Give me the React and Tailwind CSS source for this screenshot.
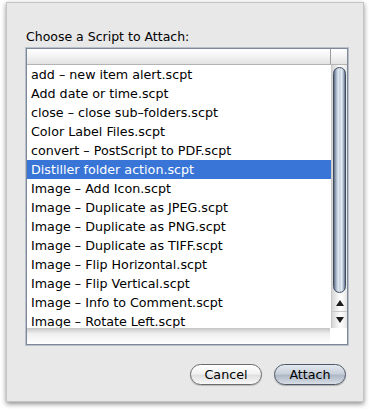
import React from 'react';

const SCRIPTS = [
  'add – new item alert.scpt',
  'Add date or time.scpt',
  'close – close sub–folders.scpt',
  'Color Label Files.scpt',
  'convert – PostScript to PDF.scpt',
  'Distiller folder action.scpt',
  'Image – Add Icon.scpt',
  'Image – Duplicate as JPEG.scpt',
  'Image – Duplicate as PNG.scpt',
  'Image – Duplicate as TIFF.scpt',
  'Image – Flip Horizontal.scpt',
  'Image – Flip Vertical.scpt',
  'Image – Info to Comment.scpt',
  'Image – Rotate Left.scpt',
];

const SELECTED = 5;

export default function App() {
  return (
    <div className="w-[374px] h-[414px] bg-white pt-[2px] pl-[6px] font-['DejaVu_Sans',sans-serif]">
      <div className="w-[358px] h-[400px] bg-[#e8e8e8] border border-[#c4c4c4] shadow-[0_2px_5px_rgba(0,0,0,0.45)] flex flex-col pl-[19px] pr-[16px]">
        {/* Title */}
        <p className="mt-[26px] h-[16px] text-[12.5px] leading-[16px] text-black">Choose a Script to Attach:</p>

        {/* List box */}
        <div className="mt-[3px] w-[322px] h-[297px] border border-[#7d8898] shadow-[0_0_0_1px_#b9c0c9] bg-white flex flex-col overflow-hidden">
          {/* Header */}
          <div className="h-[16px] flex shrink-0 border-b border-[#b4b4b4] bg-[linear-gradient(to_bottom,#ffffff,#f3f3f3_50%,#e3e3e3)]">
            <div className="flex-1 border-r border-[#9c9c9c]" />
            <div className="w-[16px]" />
          </div>

          <div className="flex h-[263px] shrink-0">
            {/* Rows */}
            <div className="flex-1 overflow-hidden min-w-0">
              {SCRIPTS.map((s, i) => (
                <div
                  key={s}
                  className={`h-[19px] pl-[4px] text-[12.7px] leading-[19px] whitespace-nowrap ${
                    i === SELECTED ? 'bg-[#3875d7] text-white' : 'text-black'
                  }`}
                >
                  {s}
                </div>
              ))}
            </div>

            {/* Scrollbar */}
            <div className="w-[16px] shrink-0 flex flex-col border-l border-[#c8c8c8] bg-[linear-gradient(to_right,#d6d6d6,#f4f4f4_40%,#ffffff_60%,#e6e6e6)]">
              <div className="h-[2px]" />
              <div className="mx-[1px] h-[226px] rounded-full border border-[#3f4c5e] bg-[linear-gradient(to_right,#5c6b80,#a9b8ca_20%,#dfe7f0_40%,#c4d1e0_55%,#e8eef5_70%,#9cadc2_88%,#5f6f85)]" />
              <div className="flex-1" />
              <div className="h-[16px] flex items-center justify-center">
                <svg width="8" height="6" viewBox="0 0 8 6"><polygon points="4,0 8,6 0,6" fill="#1c1c1c" /></svg>
              </div>
              <div className="h-[17px] flex items-center justify-center border-t border-[#c8c8c8]">
                <svg width="8" height="6" viewBox="0 0 8 6"><polygon points="0,0 8,0 4,6" fill="#1c1c1c" /></svg>
              </div>
            </div>
          </div>

          {/* Bottom band */}
          <div className="flex-1 flex">
            <div className="flex-1 bg-[linear-gradient(to_bottom,#c4c4c4,#efefef_35%,#ffffff)]" />
            <div className="w-[17px] bg-white" />
          </div>
        </div>

        {/* Buttons */}
        <div className="mt-[19px] flex justify-end gap-[12px] pr-[1px]">
          <button className="w-[72px] h-[21px] rounded-full border border-[#6b6b6b] bg-[linear-gradient(to_bottom,#ffffff,#f2f2f2_45%,#e0e0e0_55%,#f8f8f8)] text-[12.7px] leading-[19px] text-black shadow-[0_1px_1px_rgba(0,0,0,0.2)]">
            Cancel
          </button>
          <button className="w-[72px] h-[21px] rounded-full border border-[#4e5766] bg-[linear-gradient(to_bottom,#e4e9ef,#c8d0da_45%,#aeb8c6_55%,#d8dee6)] text-[12.7px] leading-[19px] text-black shadow-[0_1px_1px_rgba(0,0,0,0.25)]">
            Attach
          </button>
        </div>
      </div>
    </div>
  );
}
